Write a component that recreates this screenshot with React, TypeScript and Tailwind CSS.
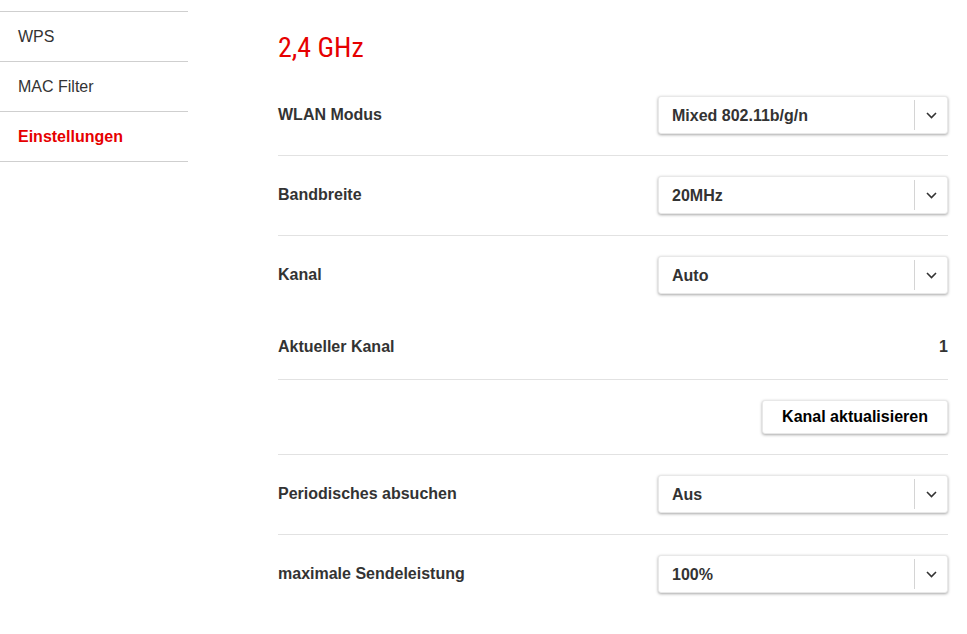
import { useState } from "react";

const menu = [
  { label: "WPS", active: false },
  { label: "MAC Filter", active: false },
  { label: "Einstellungen", active: true },
];

const Chevron = () => (
  <svg width="11" height="7" viewBox="0 0 11 7" fill="none">
    <path d="M1 1l4.5 4.5L10 1" stroke="#333" strokeWidth="1.6" />
  </svg>
);

const Select = ({ value }: { value: string }) => (
  <div className="flex h-[38px] w-[290px] items-stretch rounded-[3px] border border-[#e8e8e8] bg-white shadow-[0_1px_3px_rgba(0,0,0,0.35)]">
    <span className="flex flex-1 items-center pl-[13px] pt-px font-bold text-[#333]">{value}</span>
    <span className="my-[3px] w-px bg-[#d4d4d4]" />
    <span className="flex w-[32px] items-center justify-center pt-px">
      <Chevron />
    </span>
  </div>
);

const Row = ({ label, value, border = true }: { label: string; value: string; border?: boolean }) => (
  <div className={`flex items-center justify-between pt-5 pb-[21px] ${border ? "border-b border-[#e2e2e2]" : ""}`}>
    <span className="font-bold text-[#333]">{label}</span>
    <Select value={value} />
  </div>
);

export default function App() {
  const [active] = useState("Einstellungen");
  return (
    <div className="flex min-h-screen bg-white font-['Liberation_Sans',Arial,sans-serif] text-base leading-6">
      <aside className="w-[188px] shrink-0 pt-[11px]">
        <ul className="border-t border-[#cfcfcf]">
          {menu.map((m) => (
            <li
              key={m.label}
              className={`flex h-[50px] items-center border-b border-[#cfcfcf] pl-[18px] ${
                m.label === active ? "font-bold text-[#e60000]" : "text-[#333]"
              }`}
            >
              {m.label}
            </li>
          ))}
        </ul>
      </aside>
      <main className="flex-1 pl-[90px] pr-[19px] pt-[30px]">
        <h2 className="mb-[10px] h-9 font-['Liberation_Sans_Narrow','Roboto_Condensed',Arial,sans-serif] text-[28px] leading-9 text-[#e60000]">
          2,4 GHz
        </h2>
        <Row label="WLAN Modus" value="Mixed 802.11b/g/n" />
        <Row label="Bandbreite" value="20MHz" />
        <Row label="Kanal" value="Auto" border={false} />
        <div className="flex items-center justify-between border-b border-[#e2e2e2] py-5">
          <span className="font-bold text-[#333]">Aktueller Kanal</span>
          <span className="font-bold text-[#333]">1</span>
        </div>
        <div className="flex justify-end border-b border-[#e2e2e2] py-5">
          <button className="h-[34px] w-[186px] rounded-[3px] border border-[#e8e8e8] bg-white font-bold text-black shadow-[0_1px_3px_rgba(0,0,0,0.35)]">
            Kanal aktualisieren
          </button>
        </div>
        <Row label="Periodisches absuchen" value="Aus" />
        <Row label="maximale Sendeleistung" value="100%" border={false} />
      </main>
    </div>
  );
}
